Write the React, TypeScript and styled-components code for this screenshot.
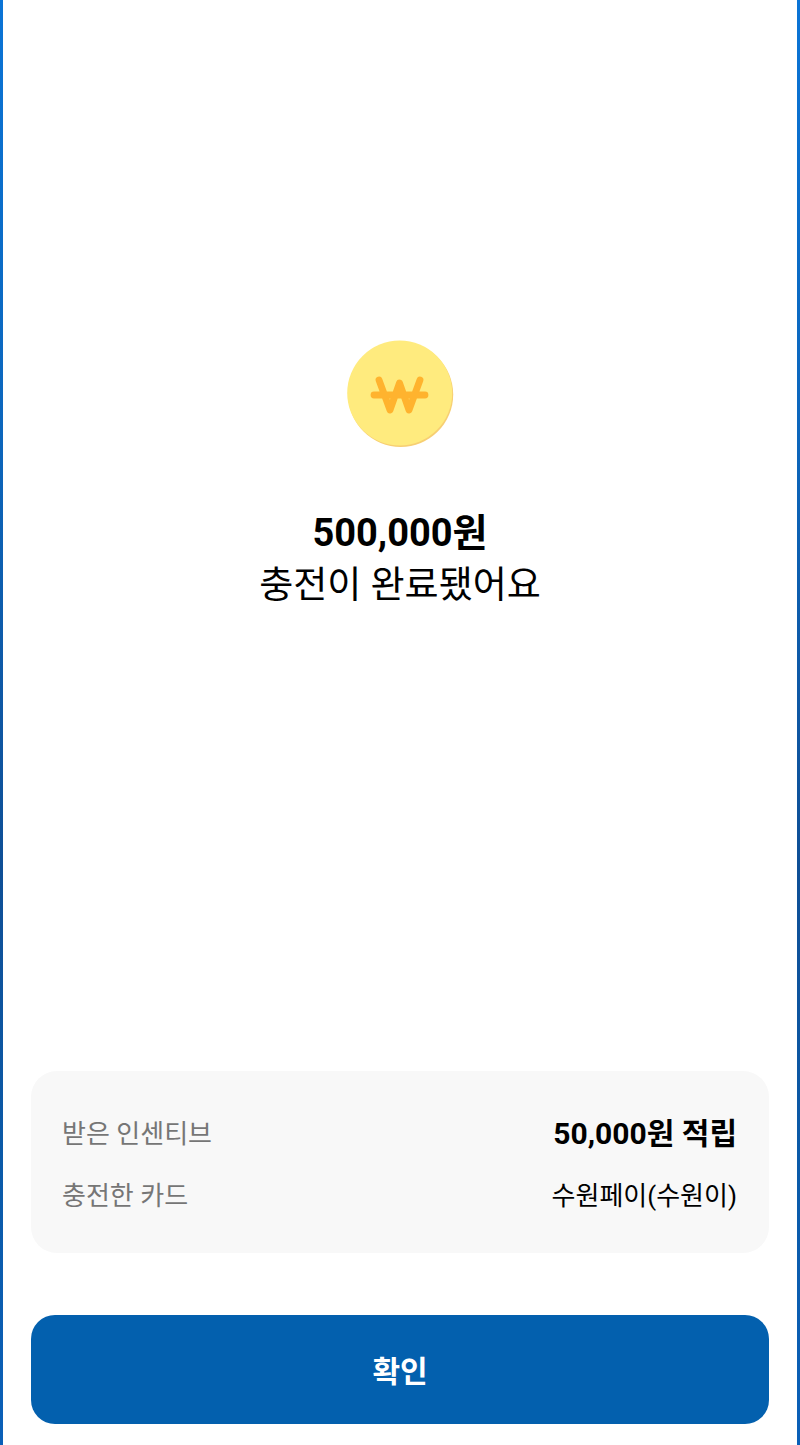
import React from "react";
import styled, { createGlobalStyle } from "styled-components";

const Global = createGlobalStyle`
  html, body { margin: 0; padding: 0; background: #fff; }
  * { box-sizing: border-box; }
`;

const Frame = styled.div`
  width: 800px;
  height: 1445px;
  padding: 0 3px;
  background: linear-gradient(180deg, #0a74d6 0%, #0c66bc 30%, #0f4f96 60%, #0b5aa8 80%, #0a60b8 100%);
  overflow: hidden;
`;

const Screen = styled.main`
  height: 100%;
  background: #fff;
  display: flex;
  flex-direction: column;
  padding: 340px 28px 21px;
  font-family: Roboto, "Noto Sans CJK KR", sans-serif;
  color: #000;
`;

const Hero = styled.section`
  display: flex;
  flex-direction: column;
  align-items: center;
  flex: 1;
`;

const Coin = styled.svg`
  width: 108px;
  height: 108px;
  display: block;
`;

const Amount = styled.h1`
  margin: 60px 0 0;
  font-size: 38px;
  line-height: 50px;
  font-weight: 700;
  letter-spacing: 0;
`;

const Message = styled.p`
  margin: 2px 0 0;
  font-size: 37px;
  line-height: 52px;
  font-weight: 400;
`;

const Card = styled.section`
  height: 182px;
  border-radius: 26px;
  background: #f8f8f8;
  padding: 40px 32px 0 31px;
  display: flex;
  flex-direction: column;
  gap: 22px;
`;

const Row = styled.div`
  display: flex;
  justify-content: space-between;
  align-items: center;
  height: 40px;
`;

const Label = styled.span`
  font-size: 26px;
  color: #767676;
`;

const Value = styled.span<{ $strong?: boolean }>`
  font-size: ${(p) => (p.$strong ? 30 : 26)}px;
  font-weight: ${(p) => (p.$strong ? 700 : 400)};
  color: #000;
`;

const Confirm = styled.button`
  margin-top: 62px;
  height: 109px;
  border: 0;
  border-radius: 24px;
  padding: 0 0 2px;
  background: #0360ae;
  color: #fff;
  font-family: inherit;
  font-size: 30px;
  font-weight: 700;
`;

export default function App() {
  return (
    <>
      <Global />
      <Frame>
        <Screen>
          <Hero>
            <Coin viewBox="0 0 108 108" aria-hidden="true">
              <circle cx="54.700" cy="54.500" r="52.500" fill="#f7cf73" />
              <circle cx="53.700" cy="53" r="52.500" fill="#ffeb7e" />
              <path
                d="M28 55H79M33 40L44 70L53.500 43L63 70L74 40"
                fill="none"
                stroke="#ffb32e"
                strokeWidth="6.800"
                strokeLinecap="round"
                strokeLinejoin="round"
              />
            </Coin>
            <Amount>500,000원</Amount>
            <Message>충전이 완료됐어요</Message>
          </Hero>
          <Card>
            <Row>
              <Label>받은 인센티브</Label>
              <Value $strong>50,000원 적립</Value>
            </Row>
            <Row>
              <Label>충전한 카드</Label>
              <Value>수원페이(수원이)</Value>
            </Row>
          </Card>
          <Confirm type="button">확인</Confirm>
        </Screen>
      </Frame>
    </>
  );
}
